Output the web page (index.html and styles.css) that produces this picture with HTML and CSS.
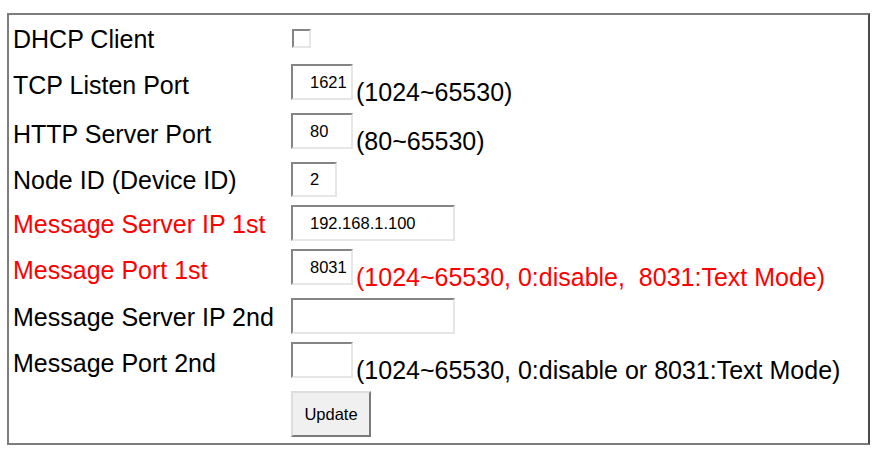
FILE: index.html
```html
<!DOCTYPE html>
<html lang="en">
<head>
    <meta charset="UTF-8">
    <meta name="viewport" content="width=device-width, initial-scale=1.0">
    <title>Network Settings</title>
    <link rel="stylesheet" href="styles.css">
</head>
<body>

<div class="panel">
    <form class="settings" onsubmit="return false;">
        <!-- DHCP -->
        <label class="label first" for="dhcp">DHCP Client</label>
        <div class="field first">
            <input type="checkbox" id="dhcp" class="check">
        </div>

        <label class="label" for="tcpPort">TCP Listen Port</label>
        <div class="field">
            <input type="text" id="tcpPort" class="box port" value="1621">
            <span class="note">(1024~65530)</span>
        </div>

        <label class="label" for="httpPort">HTTP Server Port</label>
        <div class="field">
            <input type="text" id="httpPort" class="box port" value="80">
            <span class="note">(80~65530)</span>
        </div>

        <label class="label" for="nodeId">Node ID (Device ID)</label>
        <div class="field">
            <input type="text" id="nodeId" class="box node" value="2">
        </div>

        <!-- Message server 1 -->
        <label class="label warn" for="msgIp1">Message Server IP 1st</label>
        <div class="field">
            <input type="text" id="msgIp1" class="box ip" value="192.168.1.100">
        </div>

        <label class="label warn" for="msgPort1">Message Port 1st</label>
        <div class="field">
            <input type="text" id="msgPort1" class="box port" value="8031">
            <span class="note warn">(1024~65530, 0:disable,&nbsp; 8031:Text Mode)</span>
        </div>

        <!-- Message server 2 -->
        <label class="label" for="msgIp2">Message Server IP 2nd</label>
        <div class="field">
            <input type="text" id="msgIp2" class="box ip" value="">
        </div>

        <label class="label" for="msgPort2">Message Port 2nd</label>
        <div class="field">
            <input type="text" id="msgPort2" class="box port" value="">
            <span class="note">(1024~65530, 0:disable or 8031:Text Mode)</span>
        </div>

        <div class="label"></div>
        <div class="field">
            <button type="submit" class="update">Update</button>
        </div>
    </form>
</div>

</body>
</html>
```

FILE: styles.css
```css
body {
    margin: 0;
    padding: 13px 0 0 7px;
    background: #fff;
    font-family: 'Liberation Sans', Arial, sans-serif;
    color: #000;
}
.panel {
    box-sizing: border-box;
    width: 863px;
    height: 432px;
    padding-top: 5px;
    border: 2px solid #7d7d7d;
    border-right-color: #4a4a4a;
}
.settings {
    display: grid;
    grid-template-columns: 282px 1fr;
}
.label {
    align-self: center;
    padding: 5px 0 3px 4px;
    font-size: 25px;
}
.field {
    display: flex;
    align-items: flex-start;
    padding: 4px 0;
}
.field.first {
    padding-bottom: 7px;
}
.label.first {
    padding-bottom: 6px;
}
.warn {
    color: #ff0000;
}
.check {
    appearance: none;
    -webkit-appearance: none;
    box-sizing: border-box;
    width: 19px;
    height: 19px;
    margin: 0 0 0 1px;
    align-self: center;
    background: #fff;
    border: 2px solid #e6e6e6;
    border-top-color: #858585;
    border-left-color: #858585;
}
.box {
    box-sizing: border-box;
    height: 36px;
    margin: 0;
    padding: 0 0 0 17px;
    font-family: 'Liberation Sans', Arial, sans-serif;
    font-size: 16.5px;
    color: #000;
    background: #fff;
    border: 2px solid #e6e6e6;
    border-top-color: #858585;
    border-left-color: #858585;
    outline: none;
}
.port {
    width: 62px;
}
.node {
    width: 46px;
    height: 35px;
}
.ip {
    width: 164px;
}
.note {
    margin: 15px 0 0 3px;
    font-size: 25px;
    line-height: 26px;
    white-space: nowrap;
}
.update {
    box-sizing: border-box;
    width: 80px;
    height: 46px;
    margin: 0;
    padding: 0;
    font-family: 'Liberation Sans', Arial, sans-serif;
    font-size: 16.5px;
    color: #000;
    background: #f0f0f0;
    border: 2px solid #7a7a7a;
    border-top-color: #dedede;
    border-left-color: #dedede;
    cursor: pointer;
}
```
